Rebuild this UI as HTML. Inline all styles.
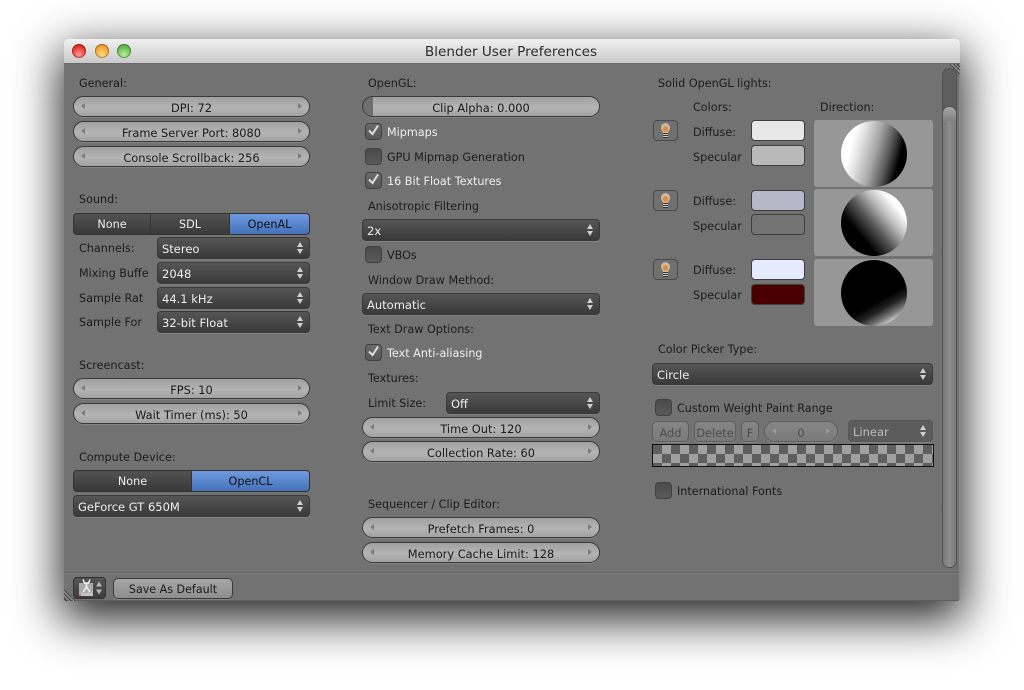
<!DOCTYPE html>
<html><head><meta charset="utf-8"><title>Blender User Preferences</title>
<style>
html,body{margin:0;padding:0;background:#fff}
body{width:1024px;height:690px;overflow:hidden;position:relative;font-family:"DejaVu Sans",sans-serif;font-size:11.2px;color:#1c1c1c}
#r{position:absolute;left:0;top:0;width:1024px;height:690px;filter:blur(.35px)}
#w{position:absolute;left:64px;top:39px;width:896px;height:562px;border-radius:5px 5px 2px 2px;box-shadow:0 15px 46px 4px rgba(0,0,0,.85)}
#tb{position:absolute;left:64px;top:39px;width:896px;height:25px;border-radius:5px 5px 0 0;background:linear-gradient(#f1f1f1,#c9c9c9);border-bottom:1px solid #6a6a6a;box-sizing:border-box;text-align:center;font-size:13.6px;line-height:26px;color:#2c2c2c;padding-right:0}
#tb span{position:relative;top:0;left:-1px}
#bd{position:absolute;left:64px;top:64px;width:896px;height:537px;background:#727272;border-radius:0 0 2px 2px;border-right:1px solid #8a8a8a;box-sizing:border-box}
#ft{position:absolute;left:64px;top:572px;width:895px;height:29px;background:#727272;border-top:1px solid #666;box-shadow:inset 0 1px 0 #7c7c7c;box-sizing:border-box;border-bottom:1px solid #5e5e5e;border-radius:0 0 2px 2px}
.d{position:absolute;width:14px;height:14px;border-radius:50%;top:44px;box-shadow:inset 0 0 0 1px rgba(0,0,0,.3)}
.t,.n,.s,.m,.c,.b,.sw,.l,.g{position:absolute;box-sizing:border-box;white-space:nowrap}
.t{height:17px;line-height:17px}
.w{color:#efefef}
.n{height:21px;border:1px solid #3a3a3a;border-radius:10.5px;background:linear-gradient(#a0a0a0,#b4b4b4 55%,#a2a2a2);text-align:center;line-height:22px;color:#1a1a1a;font-size:11.4px;box-shadow:0 1px 0 rgba(255,255,255,.12)}
.n:before,.n:after{content:"";position:absolute;top:6px;border:3.5px solid transparent}
.n:before{left:7px;border-left:0;border-right:4px solid #7c7c7c}
.n:after{right:7px;border-right:0;border-left:4px solid #7c7c7c}
.nn:before,.nn:after{display:none}
.s{height:22px;border:1px solid #3a3a3a;border-radius:4px;background:linear-gradient(#555,#3a3a3a);color:#eee;line-height:22px;font-size:11.5px;padding-left:4px;box-shadow:0 1px 0 rgba(255,255,255,.1)}
.s:before,.s:after{content:"";position:absolute;right:6px;border:3.5px solid transparent}
.s:before{top:4px;border-top:0;border-bottom:5px solid #d0d0d0}
.s:after{top:11px;border-bottom:0;border-top:5px solid #d0d0d0}
.m{height:22px;border:1px solid #333;background:linear-gradient(#525252,#393939);color:#eee;text-align:center;line-height:22px}
.a{background:linear-gradient(#6e9be0,#4470b8);color:#111}
.c{width:17px;height:17px;border:1px solid #404040;border-radius:4px;background:linear-gradient(#4a4a4a,#5a5a5a);left:0}
.ck{background:linear-gradient(#6a6a6a,#585858)}
.sw{left:751px;width:54px;height:21px;border:1px solid #3e3e3e;border-radius:4px}
.l{left:653px;width:25px;height:21px;border:1px solid #4a4a4a;border-radius:4px;background:#707070}
.g{left:814px;width:119px;height:67px;background:#979797;border-radius:3px}
.o{position:absolute;left:27px;top:1px;width:66px;height:66px;border-radius:50%}
.q{border-color:#5e5e5e;background:linear-gradient(#868686,#7a7a7a);color:#4c4c4c}
.q:before{border-right-color:#9a9a9a}.q:after{border-left-color:#9a9a9a}
</style></head><body><div id="r">
<div id="w"></div>
<div id="tb"><span>Blender User Preferences</span></div>
<div class="d" style="left:72px;background:radial-gradient(circle at 50% 75%,#ff9a94,#e8342e 60%,#b82420)"></div>
<div class="d" style="left:95px;background:radial-gradient(circle at 50% 75%,#ffd98c,#f0a332 60%,#c07f22)"></div>
<div class="d" style="left:117px;background:radial-gradient(circle at 50% 75%,#b9eca0,#63bd4d 60%,#489a38)"></div>
<div id="bd"></div>
<div id="ft"></div>

<!-- resize corners -->
<svg style="position:absolute;left:947px;top:62px" width="14" height="14"><path d="M3 2L13 12M7 2L13 8M10 2L13 5" stroke="#3c3c3c" stroke-width="1"/><path d="M4 2L13 11M8 2L13 7" stroke="#a8a8a8" stroke-width=".7"/></svg>
<svg style="position:absolute;left:63px;top:587px" width="15" height="15"><path d="M1 3L12 14M1 7L8 14M1 11L4 14" stroke="#3c3c3c"/><path d="M1 4L11 14M1 8L7 14" stroke="#a8a8a8" stroke-width=".7"/></svg>

<!-- scrollbar -->
<div style="position:absolute;left:942px;top:68px;width:15px;height:500px;border:1px solid #505050;box-sizing:border-box;border-radius:7px;background:#5f5f5f"></div>
<div style="position:absolute;left:942px;top:106px;width:15px;height:462px;border:1px solid #505050;box-sizing:border-box;border-radius:7px;background:linear-gradient(#a6a6a6,#808080 14px,transparent 14px),linear-gradient(90deg,#7a7a7a,#8d8d8d 50%,#7a7a7a)"></div>

<!-- LEFT -->
<div class="t" style="left:79px;top:75px">General:</div>
<div class="n" style="left:73px;top:96px;width:237px">DPI: 72</div>
<div class="n" style="left:73px;top:121px;width:237px">Frame Server Port: 8080</div>
<div class="n" style="left:73px;top:146px;width:237px">Console Scrollback: 256</div>

<div class="t" style="left:79px;top:191px">Sound:</div>
<div class="m" style="left:73px;top:213px;width:78px;border-radius:4px 0 0 4px">None</div>
<div class="m" style="left:150px;top:213px;width:80px">SDL</div>
<div class="m a" style="left:229px;top:213px;width:81px;border-radius:0 4px 4px 0">OpenAL</div>
<div class="t" style="left:79px;top:240px">Channels:</div>
<div class="s" style="left:157px;top:237px;width:153px">Stereo</div>
<div class="t" style="left:79px;top:265px">Mixing Buffe</div>
<div class="s" style="left:157px;top:262px;width:153px">2048</div>
<div class="t" style="left:79px;top:290px">Sample Rat</div>
<div class="s" style="left:157px;top:287px;width:153px">44.1 kHz</div>
<div class="t" style="left:79px;top:314px">Sample For</div>
<div class="s" style="left:157px;top:311px;width:153px">32-bit Float</div>

<div class="t" style="left:79px;top:357px">Screencast:</div>
<div class="n" style="left:73px;top:378px;width:237px">FPS: 10</div>
<div class="n" style="left:73px;top:403px;width:237px">Wait Timer (ms): 50</div>

<div class="t" style="left:79px;top:449px">Compute Device:</div>
<div class="m" style="left:73px;top:470px;width:119px;border-radius:4px 0 0 4px">None</div>
<div class="m a" style="left:191px;top:470px;width:119px;border-radius:0 4px 4px 0">OpenCL</div>
<div class="s" style="left:73px;top:495px;width:237px">GeForce GT 650M</div>

<!-- MIDDLE -->
<div class="t" style="left:368px;top:75px">OpenGL:</div>
<div class="n nn" style="left:362px;top:96px;width:238px;background:linear-gradient(90deg,#6e6e6e 10px,transparent 10px),linear-gradient(#a0a0a0,#b4b4b4 55%,#a2a2a2)">Clip Alpha: 0.000</div>

<div class="c ck" style="left:365px;top:123px"><svg width="15" height="15" style="display:block"><path d="M3 6.5L6.5 10L12 1.5" fill="none" stroke="#dedede" stroke-width="2"/></svg></div>
<div class="t w" style="left:387px;top:124px">Mipmaps</div>
<div class="c" style="left:365px;top:148px"></div>
<div class="t" style="left:387px;top:149px">GPU Mipmap Generation</div>
<div class="c ck" style="left:365px;top:172px"><svg width="15" height="15" style="display:block"><path d="M3 6.5L6.5 10L12 1.5" fill="none" stroke="#dedede" stroke-width="2"/></svg></div>
<div class="t w" style="left:387px;top:173px">16 Bit Float Textures</div>
<div class="t" style="left:368px;top:198px">Anisotropic Filtering</div>
<div class="s" style="left:362px;top:219px;width:238px">2x</div>
<div class="c" style="left:365px;top:246px"></div>
<div class="t" style="left:387px;top:247px">VBOs</div>
<div class="t" style="left:368px;top:272px">Window Draw Method:</div>
<div class="s" style="left:362px;top:293px;width:238px">Automatic</div>
<div class="t" style="left:368px;top:321px">Text Draw Options:</div>
<div class="c ck" style="left:365px;top:344px"><svg width="15" height="15" style="display:block"><path d="M3 6.5L6.5 10L12 1.5" fill="none" stroke="#dedede" stroke-width="2"/></svg></div>
<div class="t w" style="left:387px;top:345px">Text Anti-aliasing</div>
<div class="t" style="left:368px;top:370px">Textures:</div>
<div class="t" style="left:368px;top:395px">Limit Size:</div>
<div class="s" style="left:446px;top:392px;width:154px">Off</div>
<div class="n" style="left:362px;top:417px;width:238px">Time Out: 120</div>
<div class="n" style="left:362px;top:441px;width:238px">Collection Rate: 60</div>
<div class="t" style="left:368px;top:496px">Sequencer / Clip Editor:</div>
<div class="n" style="left:362px;top:517px;width:238px">Prefetch Frames: 0</div>
<div class="n" style="left:362px;top:542px;width:238px">Memory Cache Limit: 128</div>

<!-- RIGHT -->
<div class="t" style="left:658px;top:75px">Solid OpenGL lights:</div>
<div class="t" style="left:693px;top:99px">Colors:</div>
<div class="t" style="left:820px;top:99px">Direction:</div>

<div class="l" style="top:120px"><svg width="23" height="19" style="display:block"><path d="M7 6.5a4.5 4.5 0 1 1 9 0c0 2.500-1.500 3.500-2 5.500h-5c-.5-2-2-3-2-5.500z" fill="#c9b8a4"/><ellipse cx="11.500" cy="8" rx="2.500" ry="2.800" fill="#e58a34"/><rect x="9" y="12" width="5" height="5" fill="#3a3226"/><path d="M9 13.500h5M9 15.500h5" stroke="#d0d0d0"/></svg></div>
<div class="t" style="left:693px;top:124px">Diffuse:</div>
<div class="sw" style="top:120px;background:#e7e7e7"></div>
<div class="t" style="left:693px;top:149px">Specular</div>
<div class="sw" style="top:145px;background:#b9b9b9"></div>
<div class="g" style="top:120px"><div class="o" style="background:linear-gradient(105deg,#fff 20%,#e0e0e0 32%,#a8a8a8 50%,#555 68%,#000 82%)"></div></div>

<div class="l" style="top:190px"><svg width="23" height="19" style="display:block"><path d="M7 6.5a4.5 4.5 0 1 1 9 0c0 2.500-1.500 3.500-2 5.500h-5c-.5-2-2-3-2-5.500z" fill="#c9b8a4"/><ellipse cx="11.500" cy="8" rx="2.500" ry="2.800" fill="#e58a34"/><rect x="9" y="12" width="5" height="5" fill="#3a3226"/><path d="M9 13.500h5M9 15.500h5" stroke="#d0d0d0"/></svg></div>
<div class="t" style="left:693px;top:193px">Diffuse:</div>
<div class="sw" style="top:190px;background:#b6b8c7"></div>
<div class="t" style="left:693px;top:218px">Specular</div>
<div class="sw" style="top:214px;background:#747474"></div>
<div class="g" style="top:189px"><div class="o" style="background:linear-gradient(50deg,#000 30%,#555 48%,#bbb 65%,#fff 80%)"></div></div>

<div class="l" style="top:259px"><svg width="23" height="19" style="display:block"><path d="M7 6.5a4.5 4.5 0 1 1 9 0c0 2.500-1.500 3.500-2 5.500h-5c-.5-2-2-3-2-5.500z" fill="#c9b8a4"/><ellipse cx="11.500" cy="8" rx="2.500" ry="2.800" fill="#e58a34"/><rect x="9" y="12" width="5" height="5" fill="#3a3226"/><path d="M9 13.500h5M9 15.500h5" stroke="#d0d0d0"/></svg></div>
<div class="t" style="left:693px;top:262px">Diffuse:</div>
<div class="sw" style="top:259px;background:#e6eaff"></div>
<div class="t" style="left:693px;top:287px">Specular</div>
<div class="sw" style="top:284px;background:#4b0000"></div>
<div class="g" style="top:259px"><div class="o" style="background:linear-gradient(150deg,#000 60%,#222 70%,#777 80%,#ccc 87%)"></div></div>

<div class="t" style="left:658px;top:341px">Color Picker Type:</div>
<div class="s" style="left:652px;top:363px;width:281px">Circle</div>
<div class="c" style="left:655px;top:399px"></div>
<div class="t" style="left:677px;top:400px">Custom Weight Paint Range</div>

<div class="n nn q" style="left:652px;top:421px;width:37px;border-radius:5px">Add</div>
<div class="n nn q" style="left:694px;top:421px;width:42px;border-radius:5px">Delete</div>
<div class="n nn q" style="left:741px;top:421px;width:18px;border-radius:5px">F</div>
<div class="n q" style="left:764px;top:421px;width:74px">0</div>
<div class="s" style="left:848px;top:420px;width:85px;background:#5c5c5c;border-color:#565656;color:#bcbcbc">Linear</div>
<div style="position:absolute;left:652px;top:444px;width:282px;height:23px;box-sizing:border-box;border:1px solid #111;background:conic-gradient(#a0a0a0 25%,#5e5e5e 0 50%,#a0a0a0 0 75%,#5e5e5e 0) 0 0/18px 18px"></div>
<div class="c" style="left:655px;top:482px"></div>
<div class="t" style="left:677px;top:483px">International Fonts</div>

<!-- footer -->
<div style="position:absolute;left:73px;top:577px;width:33px;height:22px;border:1px solid #333;border-radius:4px;box-sizing:border-box;background:linear-gradient(#555,#3c3c3c)">
<svg width="31" height="20" style="display:block"><rect x="5" y="5" width="14" height="13" fill="#ababab"/><rect x="5" y="15" width="14" height="3" fill="#c4c4c4"/><path d="M9 1.500l1.500 3.500h4L16 1.500M12.500 5v4M9 14l3.500-5 3.500 5" stroke="#f4f4f4" stroke-width="1.500" fill="none"/><rect x="5" y="16" width="2" height="1.500" fill="#e05050"/><path d="M22 8.500l3-5 3 5zM22 11.500l3 5 3-5z" fill="#b8b8b8"/></svg></div>
<div class="n nn" style="left:113px;top:578px;width:120px;height:21px;border-radius:5px;font-size:11.1px;line-height:21px;background:linear-gradient(#a6a6a6,#8e8e8e)">Save As Default</div>
</div></body></html>
